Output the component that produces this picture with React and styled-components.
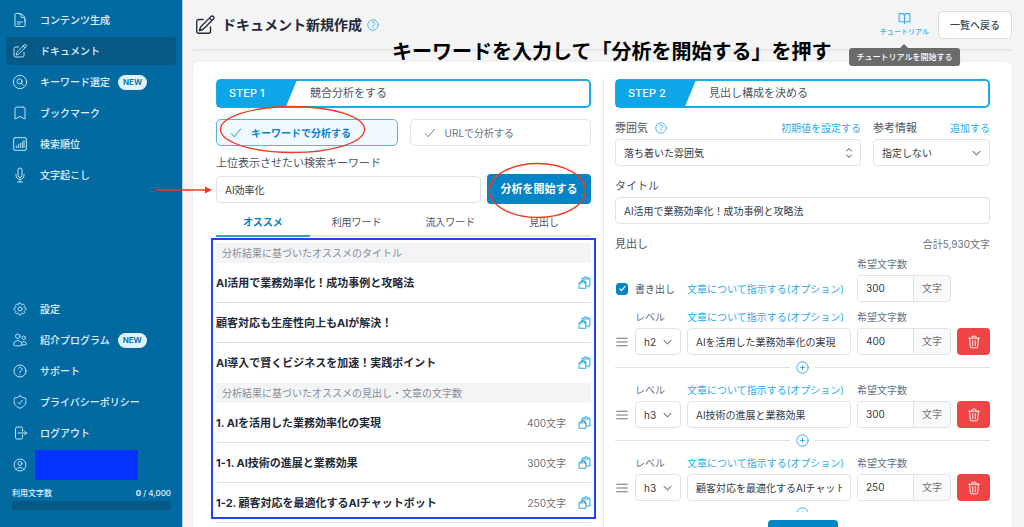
import React from "react";
import styled, { createGlobalStyle } from "styled-components"
import {
    HiOutlineDocumentText,
    HiOutlinePencilSquare,
    HiOutlineBookmark,
    HiOutlineMicrophone,
    HiOutlineCog8Tooth,
    HiOutlineUsers,
    HiOutlineQuestionMarkCircle,
    HiOutlineShieldCheck,
    HiOutlineArrowRightOnRectangle,
    HiOutlineUserCircle,
} from "react-icons/hi2"
import { FiBookOpen } from "react-icons/fi"

const GlobalStyle = createGlobalStyle`
    * {
        box-sizing: border-box;
    }
    body {
        margin: 0;
        background: #f4f4f5;
        color: #4b5563;
        font-family: Inter, "Noto Sans CJK JP", sans-serif;
        font-size: 10px;
        line-height: 16px;
    }
    button, input, select {
        margin: 0;
        font: inherit;
        color: inherit;
    }
    button {
        cursor: pointer;
    }
    a {
        color: inherit;
        text-decoration: none;
    }
    svg {
        display: block;
        flex: none;
    }
`

const Page = styled.div`
    display: flex;
    height: 100vh;
    overflow: hidden;
`

/* ---------- sidebar ---------- */

const Sidebar = styled.aside`
    flex: none;
    display: flex;
    flex-direction: column;
    justify-content: space-between;
    width: 183px;
    padding: 6px 6px 17px;
    background: #0369a1;
    border-right: 1px solid #b9cfdd;
    color: #e0f2fe;
`

const NavList = styled.nav`
    display: flex;
    flex-direction: column;
    gap: 3px;
`

const NavItem = styled.a`
    display: flex;
    align-items: center;
    gap: 12px;
    height: 28px;
    padding: 0 6px;
    border-radius: 4px;
    font-weight: 500;
    background: ${p => p.$active ? "#075985" : "transparent"};
    svg {
        color: #bae6fd;
    }
`

const Badge = styled.span`
    margin-left: -4px;
    padding: 0 5px;
    height: 15px;
    border-radius: 8px;
    background: #e0f2fe;
    color: #0369a1;
    font-size: 8px;
    font-weight: 600;
    line-height: 15px;
`

const Account = styled.div`
    display: flex;
    align-items: center;
    gap: 7px;
    height: 30px;
    margin: 3px 0 0 6px;
    svg {
        color: #bae6fd;
    }
`

const AccountName = styled.div`
    width: 103px;
    height: 30px;
    background: #0433ff;
`

const Usage = styled.div`
    margin: 5px 5px 0 6px;
    font-size: 8px;
    font-weight: 500;
`

const UsageRow = styled.div`
    display: flex;
    justify-content: space-between;
`

const UsageBar = styled.div`
    height: 9px;
    border-radius: 3px;
    background: #075985;
`

/* ---------- header ---------- */

const Main = styled.main`
    flex: 1;
    min-width: 0;
    display: flex;
    flex-direction: column;
    padding: 0 12px 0 10px;
`

const Header = styled.header`
    position: relative;
    flex: none;
    display: flex;
    align-items: center;
    height: 51px;
    margin-bottom: 11px;
    border-bottom: 2px solid #e5e7eb;
`

const Title = styled.h1`
    display: flex;
    align-items: center;
    gap: 6px;
    flex: 1;
    margin: 0 0 0 1px;
    color: #1f2937;
    font-size: 14px;
    font-weight: 700;
    line-height: 20px;
`

const HelpButton = styled.button`
    padding: 0;
    border: 0;
    background: none;
    color: #38b0ee;
`

const TitleHelp = styled(HelpButton)`
    margin-left: -2px;
`

const Tutorial = styled.a`
    position: relative;
    display: flex;
    flex-direction: column;
    align-items: center;
    gap: 2px;
    margin-right: 9px;
    color: #38b0ee;
    font-size: 7px;
    font-weight: 500;
    line-height: 10px;
`

const Tooltip = styled.span`
    position: absolute;
    top: 36px;
    left: 50%;
    z-index: 2;
    transform: translateX(-50%);
    padding: 0 8px;
    border-radius: 3px;
    background: #6b6b6b;
    color: #fff;
    font-size: 8px;
    line-height: 18px;
    white-space: nowrap;
    &:before {
        content: "";
        position: absolute;
        left: 50%;
        bottom: 100%;
        margin-left: -4px;
        border: 4px solid transparent;
        border-top: 0;
        border-bottom-color: #6b6b6b;
    }
`

const BackButton = styled.button`
    height: 28px;
    padding: 0 11px;
    border: 1px solid #d9dce1;
    border-radius: 5px;
    background: #fff;
    color: #374151;
    font-weight: 500;
`

const Caption = styled.p`
    position: absolute;
    left: 199px;
    top: 37px;
    z-index: 1;
    margin: 0;
    color: #000;
    font-size: 20px;
    font-weight: 700;
    line-height: 30px;
    white-space: nowrap;
`

/* ---------- card ---------- */

const Card = styled.div`
    flex: 1;
    min-height: 0;
    display: flex;
    padding: 17px 22px 0 23px;
    border-radius: 6px 6px 0 0;
    background: #fff;
    box-shadow: 0 0 2px rgba(0, 0, 0, .08);
`

const Column = styled.section`
    flex: 1;
    min-width: 0;
`

const ColumnLine = styled.div`
    flex: none;
    width: 1px;
    margin: 0 11px 0 12px;
    background: #e5e7eb;
`

const Step = styled.div`
    display: flex;
    height: 29px;
    margin-bottom: ${p => p.$space}px;
    border: 2px solid #1ea9ea;
    border-radius: 5px;
    font-size: 11px;
    line-height: 25px;
    color: #4b5563;
`

const StepLabel = styled.span`
    width: 80px;
    margin: -1px 13px -1px -1px;
    padding-left: 12px;
    background: #0ea5e9;
    color: #fff;
    font-weight: 500;
    line-height: 27px;
    clip-path: polygon(0 0, 100% 0, 86% 100%, 0 100%);
`

const Modes = styled.div`
    display: grid;
    grid-template-columns: 1fr 1fr;
    gap: 12px;
    margin-bottom: 9px;
`

const Mode = styled.button`
    position: relative;
    display: flex;
    align-items: center;
    gap: 9px;
    height: 27px;
    padding: 0 13px;
    border: 1px solid ${p => p.$active ? "#5cb3e2" : "#e1e3e7"};
    border-radius: 5px;
    background: ${p => p.$active ? "#f0f9ff" : "#fff"};
    color: ${p => p.$active ? "#0284c7" : "#6b7280"};
    font-weight: ${p => p.$active ? 700 : 400};
`

const Mark = styled.svg`
    position: absolute;
    z-index: 1;
    overflow: visible;
    pointer-events: none;
    color: #f23a1d;
`

const ModeMark = styled(Mark)`
    left: 3px;
    top: -14px;
`

const StartMark = styled(Mark)`
    left: 2px;
    top: -11px;
`

const ArrowMark = styled(Mark)`
    left: -60px;
    top: 10px;
`

const Label = styled.label`
    display: block;
    margin-bottom: 3px;
    font-size: 11px;
    line-height: 16px;
`

const Input = styled.input`
    display: block;
    width: 100%;
    min-width: 0;
    height: 27px;
    padding: 0 8px;
    border: 1px solid #dfe2e6;
    border-radius: 4px;
    background: #fff;
    color: #333a45;
    text-overflow: clip;
`

const SearchRow = styled.div`
    display: flex;
    align-items: center;
    gap: 6px;
`

const KeywordBox = styled.div`
    position: relative;
    flex: 1;
`

const StartButton = styled.button`
    position: relative;
    width: 104px;
    height: 30px;
    padding: 0;
    border: 0;
    border-radius: 4px;
    background: #0284c7;
    color: #fff;
    font-size: 11px;
    font-weight: 700;
`

const Tabs = styled.div`
    display: grid;
    grid-template-columns: repeat(4, 1fr);
    margin: 5px 0 6px;
`

const Tab = styled.button`
    height: 28px;
    padding: 0;
    border: 0;
    border-bottom: 2px solid ${p => p.$active ? "#2a9fd8" : "#e5e7eb"};
    background: none;
    color: ${p => p.$active ? "#0284c7" : "#4b5563"};
    font-weight: ${p => p.$active ? 700 : 400};
`

const Results = styled.div`
    position: relative;
`

const Outline = styled.div`
    position: absolute;
    top: -5px;
    left: -5px;
    right: -5px;
    height: 281px;
    border: 2px solid #2142f5;
    pointer-events: none;
`

const GroupName = styled.h2`
    margin: 0;
    padding: 0 6px;
    background: #f3f4f6;
    color: #868c98;
    font-size: 10px;
    font-weight: 400;
    line-height: 20px;
`

const ResultList = styled.ul`
    margin: 0;
    padding: 0;
    list-style: none;
`

const Result = styled.li`
    display: flex;
    align-items: center;
    gap: 12px;
    height: 40px;
    border-bottom: 1px solid #dfe1e5;
    &:last-child {
        border-bottom-color: ${p => p.$more ? "#dfe1e5" : "transparent"};
    }
`

const ResultText = styled.span`
    flex: 1;
    color: #1f2937;
    font-size: 11px;
    font-weight: 700;
    white-space: nowrap;
`

const Count = styled.span`
    color: #6b7280;
`

const PlainButton = styled.button`
    padding: 0;
    border: 0;
    background: none;
    color: #2bacee;
`

/* ---------- outline editor ---------- */

const ToneRow = styled.div`
    display: grid;
    grid-template-columns: 246fr 117fr;
    gap: 12px;
    margin-bottom: 12px;
`

const FieldHead = styled.div`
    display: flex;
    align-items: center;
    gap: 6px;
    a {
        margin: 0 0 3px auto;
    }
    button {
        margin-bottom: 3px;
    }
`

const TextLink = styled.a`
    color: #2bacee;
    white-space: nowrap;
`

const Field = styled.div`
    margin-bottom: 12px;
`

const SelectBox = styled.div`
    position: relative;
    svg {
        position: absolute;
        right: ${p => p.$inset}px;
        top: 50%;
        transform: translateY(-50%);
        color: #7d8490;
        pointer-events: none;
    }
`

const Select = styled.select`
    display: block;
    width: 100%;
    height: 27px;
    padding: 0 8px;
    border: 1px solid #dfe2e6;
    border-radius: 4px;
    background: #fff;
    color: #333a45;
    appearance: none;
`

const HeadingsTitle = styled.div`
    display: flex;
    justify-content: space-between;
    margin-bottom: 4px;
    color: #6b7280;
`

const HeadingsName = styled.span`
    color: #4b5563;
    font-size: 11px;
`

const Headings = styled.div`
    max-height: calc(100vh - 271px);
    overflow: hidden;
`

const HeadingRow = styled.div`
    display: grid;
    grid-template-columns: 14px 46px 1fr 94px 33px;
    column-gap: 6px;
    row-gap: 3px;
    align-items: center;
    color: #6b7280;
`

const Intro = styled(HeadingRow)`
    margin-bottom: 7px;
`

const Cell = styled.div`
    grid-column: ${p => p.$col};
    white-space: nowrap;
`

const CheckLabel = styled.label`
    grid-column: 1 / 3;
    display: flex;
    align-items: center;
    gap: 7px;
    padding-left: 1px;
    color: #4b5563;
    white-space: nowrap;
`

const CheckBox = styled.span`
    display: grid;
    place-items: center;
    color: #fff;
    input, svg {
        grid-area: 1 / 1;
    }
    svg {
        pointer-events: none;
    }
`

const Check = styled.input`
    width: 12px;
    height: 12px;
    border: 1px solid #0284c7;
    border-radius: 3px;
    appearance: none;
    &:checked {
        background: #0284c7;
    }
`

const CountGroup = styled.div`
    display: flex;
    height: 27px;
    border: 1px solid #dfe2e6;
    border-radius: 4px;
    overflow: hidden;
    background: #f9fafb;
    line-height: 25px;
`

const CountInput = styled.input`
    width: 56px;
    padding: 0 8px;
    border: 0;
    border-right: 1px solid #dfe2e6;
    background: #fff;
    color: #333a45;
`

const Unit = styled.span`
    flex: 1;
    text-align: center;
`

const DeleteButton = styled.button`
    display: grid;
    place-items: center;
    height: 27px;
    padding: 0;
    border: 0;
    border-radius: 4px;
    background: #ef4444;
    color: #fff;
`

const Divider = styled.div`
    display: flex;
    align-items: center;
    gap: 6px;
    height: 25px;
    margin-bottom: 2px;
    &:before, &:after {
        content: "";
        flex: 1;
        height: 1px;
        background: #dfe1e5;
    }
`

const NextButton = styled.button`
    display: block;
    width: 70px;
    height: 30px;
    margin: 8px auto 0;
    border: 0;
    border-radius: 4px;
    background: #0284c7;
    color: #fff;
    font-size: 11px;
    font-weight: 700;
`

/* ---------- drawings ---------- */

const Svg = ({ size = 16, width = 1.5, children }) => (
    <svg width={size} height={size} viewBox="0 0 24 24" fill="none" stroke="currentColor"
        strokeWidth={width} strokeLinecap="round" strokeLinejoin="round">
        {children}
    </svg>
)

const SearchCircle = () => (
    <Svg>
        <circle cx="12" cy="12" r="10" />
        <circle cx="11.3" cy="11" r="3.8" />
        <path d="M14 13.8l3 3" />
    </Svg>
)

const ChartSquare = () => (
    <Svg>
        <rect x="2.5" y="2.5" width="19" height="19" rx="2" />
        <path d="M6.5 17.5v-2.5M9.5 17.5v-4.5M12.5 17.5v-6.5M15.5 17.5V9M18 17.5V6.5" />
    </Svg>
)

const CheckIcon = ({ size = 12, width = 1.8 }) => (
    <Svg size={size} width={width}>
        <path d="M3 13.5l5.5 6L21 4.5" />
    </Svg>
)

const CopyIcon = () => (
    <Svg size={13} width={1.9}>
        <path d="M7.5 9L2 13v9.500h12.500v-8.500c0-3-2-5-5-5z" />
        <path d="M7.500 9v4H2M10.500 9.200c1 1 1 2 1 3.800 1.500 0 2.300 0 3 1" />
        <path d="M7.500 9V4h3M18.500 4H22v14.500h-7.500" />
        <path d="M10.500 5.500V3.500c1.500 0 1.800-2 4-2s2.500 2 4 2v2z" />
    </Svg>
)

const TrashIcon = () => (
    <Svg size={14} width={1.6}>
        <path d="M3 5.500h18M8.500 5.500V3.500a1.500 1.500 0 0 1 1.500-1.500h4a1.500 1.500 0 0 1 1.500 1.500v2" />
        <path d="M4.500 5.500l1.200 15a1.700 1.700 0 0 0 1.700 1.500h9.200a1.700 1.700 0 0 0 1.700-1.500l1.200-15" />
        <path d="M9.800 9.500v9M14.200 9.500v9" />
    </Svg>
)

const PlusCircle = () => (
    <Svg size={13} width={1.8}>
        <circle cx="12" cy="12" r="10.500" />
        <path d="M12 8.500v7M8.500 12h7" />
    </Svg>
)

const ChevronDown = () => (
    <Svg size={11} width={2.6}>
        <path d="M4.500 8.500l7.500 7.500 7.500-7.500" />
    </Svg>
)

const ChevronUpDown = () => (
    <Svg size={14} width={1.8}>
        <path d="M8 8.500l4-4 4 4M8 15.500l4 4 4-4" />
    </Svg>
)

const Bars = () => (
    <Svg size={14} width={1.8}>
        <path d="M3 5.500h18M3 12h18M3 18.500h18" />
    </Svg>
)

/* ---------- data ---------- */

const mainNav = [
    { name: "コンテンツ生成", icon: <HiOutlineDocumentText size={16} /> },
    { name: "ドキュメント", icon: <HiOutlinePencilSquare size={16} />, active: true },
    { name: "キーワード選定", icon: <SearchCircle />, isNew: true },
    { name: "ブックマーク", icon: <HiOutlineBookmark size={16} /> },
    { name: "検索順位", icon: <ChartSquare /> },
    { name: "文字起こし", icon: <HiOutlineMicrophone size={16} /> },
]

const subNav = [
    { name: "設定", icon: <HiOutlineCog8Tooth size={16} /> },
    { name: "紹介プログラム", icon: <HiOutlineUsers size={16} />, isNew: true },
    { name: "サポート", icon: <HiOutlineQuestionMarkCircle size={16} /> },
    { name: "プライバシーポリシー", icon: <HiOutlineShieldCheck size={16} /> },
    { name: "ログアウト", icon: <HiOutlineArrowRightOnRectangle size={16} /> },
]

const titles = [
    "AI活用で業務効率化！成功事例と攻略法",
    "顧客対応も生産性向上もAIが解決！",
    "AI導入で賢くビジネスを加速！実践ポイント",
]

const chapters = [
    { text: "1. AIを活用した業務効率化の実現", count: 400 },
    { text: "1-1. AI技術の進展と業務効果", count: 300 },
    { text: "1-2. 顧客対応を最適化するAIチャットボット", count: 250 },
]

const headings = [
    { level: "h2", text: "AIを活用した業務効率化の実現", count: 400 },
    { level: "h3", text: "AI技術の進展と業務効果", count: 300 },
    { level: "h3", text: "顧客対応を最適化するAIチャットボット", count: 250 },
]

/* ---------- parts ---------- */

const Nav = ({ items, label }) => (
    <NavList aria-label={label}>
        {items.map(item => (
            <NavItem href="#" key={item.name} $active={item.active}>
                {item.icon}
                {item.name}
                {item.isNew && <Badge>NEW</Badge>}
            </NavItem>
        ))}
    </NavList>
)

const StepBar = ({ label, title, space }) => (
    <Step $space={space}>
        <StepLabel>{label}</StepLabel>
        {title}
    </Step>
)

const ResultItem = ({ text, count }) => (
    <Result $more={!!count}>
        <ResultText>{text}</ResultText>
        {count && <Count>{count}文字</Count>}
        <PlainButton aria-label="コピー"><CopyIcon /></PlainButton>
    </Result>
)

const CountField = ({ id, value }) => (
    <CountGroup>
        <CountInput id={id} defaultValue={value} />
        <Unit>文字</Unit>
    </CountGroup>
)

const Heading = ({ index, level, text, count }) => (
    <>
        <HeadingRow>
            <Cell $col="2"><label htmlFor={"level" + index}>レベル</label></Cell>
            <Cell $col="3"><TextLink href="#">文章について指示する(オプション)</TextLink></Cell>
            <Cell $col="4"><label htmlFor={"count" + index}>希望文字数</label></Cell>
            <Cell $col="1"><Bars /></Cell>
            <SelectBox $inset={8}>
                <Select id={"level" + index} defaultValue={level}>
                    <option>h2</option>
                    <option>h3</option>
                </Select>
                <ChevronDown />
            </SelectBox>
            <Input aria-label="見出し" defaultValue={text} />
            <CountField id={"count" + index} value={count} />
            <DeleteButton aria-label="削除"><TrashIcon /></DeleteButton>
        </HeadingRow>
        <Divider>
            <PlainButton aria-label="見出しを追加"><PlusCircle /></PlainButton>
        </Divider>
    </>
)

const App = () => (
    <Page>
        <GlobalStyle />
        <Sidebar>
            <Nav items={mainNav} label="メイン" />
            <div>
                <Nav items={subNav} label="サブ" />
                <Account>
                    <HiOutlineUserCircle size={16} />
                    <AccountName />
                </Account>
                <Usage>
                    <UsageRow>
                        <span>利用文字数</span>
                        <span><b>0</b> / 4,000</span>
                    </UsageRow>
                    <UsageBar />
                </Usage>
            </div>
        </Sidebar>

        <Main>
            <Header>
                <Title>
                    <HiOutlinePencilSquare size={22} />
                    ドキュメント新規作成
                    <TitleHelp aria-label="ヘルプ"><HiOutlineQuestionMarkCircle size={14} /></TitleHelp>
                </Title>
                <Tutorial href="#">
                    <FiBookOpen size={13} />
                    チュートリアル
                    <Tooltip role="tooltip">チュートリアルを開始する</Tooltip>
                </Tutorial>
                <BackButton>一覧へ戻る</BackButton>
                <Caption>キーワードを入力して「分析を開始する」を押す</Caption>
            </Header>

            <Card>
                <Column>
                    <StepBar label="STEP 1" title="競合分析をする" space={11} />
                    <Modes>
                        <Mode $active>
                            <CheckIcon />
                            キーワードで分析する
                            <ModeMark width="145" height="47" fill="none" stroke="currentColor" strokeWidth="1.3">
                                <ellipse cx="72.5" cy="23.5" rx="72" ry="23" />
                            </ModeMark>
                        </Mode>
                        <Mode>
                            <CheckIcon />
                            URLで分析する
                        </Mode>
                    </Modes>
                    <Label htmlFor="keyword">上位表示させたい検索キーワード</Label>
                    <SearchRow>
                        <KeywordBox>
                            <Input id="keyword" defaultValue="AI効率化" />
                            <ArrowMark width="56" height="8" fill="currentColor">
                                <path d="M0 3.3h49V0.5L56 4l-7 3.5V4.7H0z" />
                            </ArrowMark>
                        </KeywordBox>
                        <StartButton>
                            分析を開始する
                            <StartMark width="97" height="55" fill="none" stroke="currentColor" strokeWidth="1.3">
                                <ellipse cx="48.5" cy="27.5" rx="48" ry="27" />
                            </StartMark>
                        </StartButton>
                    </SearchRow>
                    <Tabs>
                        <Tab $active>オススメ</Tab>
                        <Tab>利用ワード</Tab>
                        <Tab>流入ワード</Tab>
                        <Tab>見出し</Tab>
                    </Tabs>
                    <Results>
                        <GroupName>分析結果に基づいたオススメのタイトル</GroupName>
                        <ResultList>
                            {titles.map(text => <ResultItem key={text} text={text} />)}
                        </ResultList>
                        <GroupName>分析結果に基づいたオススメの見出し・文章の文字数</GroupName>
                        <ResultList>
                            {chapters.map(c => <ResultItem key={c.text} {...c} />)}
                        </ResultList>
                        <Outline />
                    </Results>
                </Column>

                <ColumnLine />

                <Column>
                    <StepBar label="STEP 2" title="見出し構成を決める" space={12} />
                    <ToneRow>
                        <div>
                            <FieldHead>
                                <Label htmlFor="tone">雰囲気</Label>
                                <HelpButton aria-label="ヘルプ"><HiOutlineQuestionMarkCircle size={14} /></HelpButton>
                                <TextLink href="#">初期値を設定する</TextLink>
                            </FieldHead>
                            <SelectBox $inset={5}>
                                <Select id="tone"><option>落ち着いた雰囲気</option></Select>
                                <ChevronUpDown />
                            </SelectBox>
                        </div>
                        <div>
                            <FieldHead>
                                <Label htmlFor="reference">参考情報</Label>
                                <TextLink href="#">追加する</TextLink>
                            </FieldHead>
                            <SelectBox $inset={8}>
                                <Select id="reference"><option>指定しない</option></Select>
                                <ChevronDown />
                            </SelectBox>
                        </div>
                    </ToneRow>
                    <Field>
                        <Label htmlFor="title">タイトル</Label>
                        <Input id="title" defaultValue="AI活用で業務効率化！成功事例と攻略法" />
                    </Field>
                    <HeadingsTitle>
                        <HeadingsName>見出し</HeadingsName>
                        <span>合計5,930文字</span>
                    </HeadingsTitle>
                    <Headings>
                        <Intro>
                            <Cell $col="4"><label htmlFor="introCount">希望文字数</label></Cell>
                            <CheckLabel>
                                <CheckBox>
                                    <Check type="checkbox" defaultChecked />
                                    <CheckIcon size={7} width={4} />
                                </CheckBox>
                                書き出し
                            </CheckLabel>
                            <Cell $col="3"><TextLink href="#">文章について指示する(オプション)</TextLink></Cell>
                            <CountField id="introCount" value={300} />
                        </Intro>
                        {headings.map((h, i) => <Heading key={h.text} index={i} {...h} />)}
                    </Headings>
                    <NextButton aria-label="次へ" />
                </Column>
            </Card>
        </Main>
    </Page>
)

export default App
